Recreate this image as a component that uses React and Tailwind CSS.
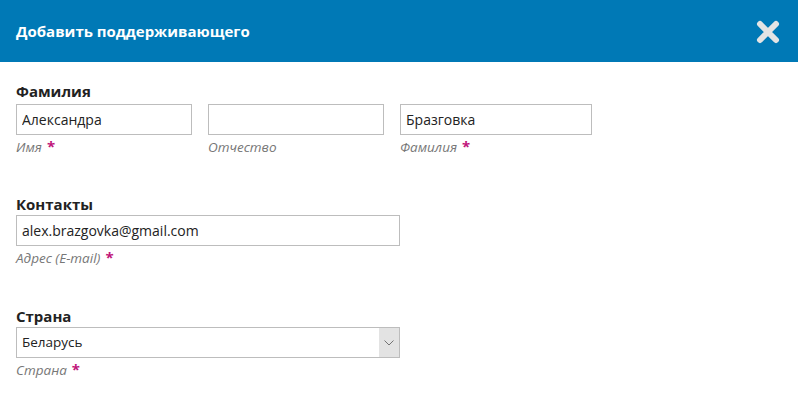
import React from 'react';

function Hint({ text, required }) {
  return (
    <div className="mt-[3px] text-[13.5px] italic leading-[18px] text-[#777]">
      {text}
      {required && <span className="ml-[5px] not-italic text-[15px] font-bold leading-[14px] text-[#c0157a]">*</span>}
    </div>
  );
}

function TextField({ value, hint, required, width = 'w-[176px]' }) {
  return (
    <div className={width}>
      <input
        type="text"
        defaultValue={value}
        className="block h-[31px] w-full border border-[#bdbdbd] bg-white px-[5px] text-[14px] text-[#222] outline-none"
      />
      <Hint text={hint} required={required} />
    </div>
  );
}

export default function App() {
  return (
    <div className="h-[404px] w-[798px] bg-white" style={{ fontFamily: '"Open Sans", "Noto Sans", sans-serif' }}>
      {/* Шапка */}
      <div className="flex h-[62px] items-center justify-between bg-[#0079b6] pl-[16px] pr-[18px]">
        <h1 className="text-[15px] font-bold text-white">Добавить поддерживающего</h1>
        <svg width="24" height="24" viewBox="0 0 24 24" className="mt-[1px]">
          <path d="M4 4 L20 20 M20 4 L4 20" stroke="#e4e4e4" strokeWidth="6" strokeLinecap="round" />
        </svg>
      </div>

      <div className="px-[16px] pt-[19px]">
        <div className="text-[15px] font-bold leading-[20px] text-[#222]">Фамилия</div>
        <div className="mt-[3px] flex gap-[16px]">
          <TextField value="Александра" hint="Имя" required />
          <TextField value="" hint="Отчество" />
          <TextField value="Бразговка" hint="Фамилия" required width="w-[192px]" />
        </div>

        <div className="mt-[38px] text-[15px] font-bold leading-[20px] text-[#222]">Контакты</div>
        <div className="mt-[1px] w-[384px]">
          <input
            type="text"
            defaultValue="alex.brazgovka@gmail.com"
            className="block h-[31px] w-full border border-[#bdbdbd] bg-white px-[5px] text-[14px] text-[#222] outline-none"
          />
          <Hint text="Адрес (E-mail)" required />
        </div>

        <div className="mt-[39px] text-[15px] font-bold leading-[20px] text-[#222]">Страна</div>
        <div className="mt-[1px] w-[384px]">
          <div className="flex h-[31px] w-full items-stretch border border-[#bdbdbd] bg-white">
            <div className="flex flex-1 items-center px-[5px] text-[13.5px] text-[#222]">Беларусь</div>
            <div className="flex w-[20px] items-center justify-center bg-[#e3e3e3]">
              <svg width="10" height="6" viewBox="0 0 10 6">
                <path d="M0.5 0.5 L5 5 L9.5 0.5" fill="none" stroke="#666" strokeWidth="0.9" />
              </svg>
            </div>
          </div>
          <Hint text="Страна" required />
        </div>
      </div>
    </div>
  );
}
